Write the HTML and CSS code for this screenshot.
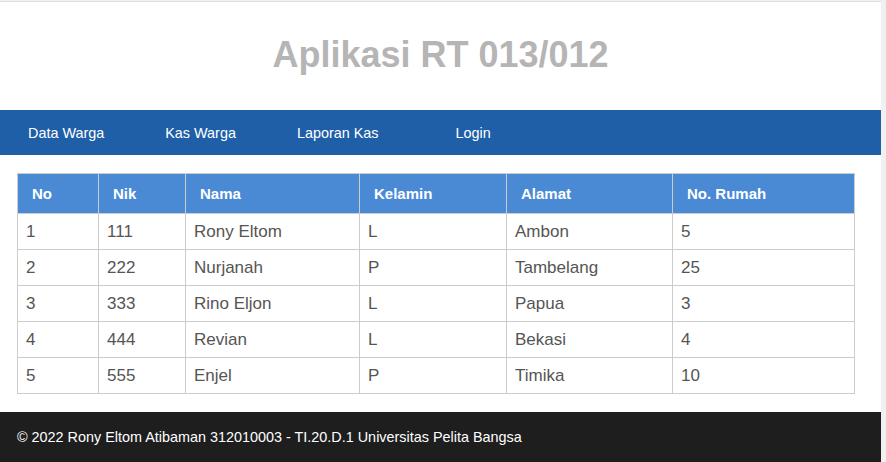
FILE: index.html
```html
<!DOCTYPE html>
<html lang="id">
<head>
<meta charset="utf-8">
<title>Aplikasi RT 013/012</title>
<link rel="stylesheet" href="styles.css">
</head>
<body>
<div class="page">
  <header class="header">
    <h1 class="title">Aplikasi RT 013/012</h1>
  </header>
  <nav class="nav">
    <a class="nav-link" href="#">Data Warga</a>
    <a class="nav-link" href="#">Kas Warga</a>
    <a class="nav-link nav-link-wide" href="#">Laporan Kas</a>
    <a class="nav-link" href="#">Login</a>
  </nav>
  <main class="content">
    <table class="data-table">
      <colgroup>
        <col class="c1"><col class="c2"><col class="c3"><col class="c4"><col class="c5"><col class="c6">
      </colgroup>
      <thead>
        <tr><th>No</th><th>Nik</th><th>Nama</th><th>Kelamin</th><th>Alamat</th><th>No. Rumah</th></tr>
      </thead>
      <tbody>
        <tr><td>1</td><td>111</td><td>Rony Eltom</td><td>L</td><td>Ambon</td><td>5</td></tr>
        <tr><td>2</td><td>222</td><td>Nurjanah</td><td>P</td><td>Tambelang</td><td>25</td></tr>
        <tr><td>3</td><td>333</td><td>Rino Eljon</td><td>L</td><td>Papua</td><td>3</td></tr>
        <tr><td>4</td><td>444</td><td>Revian</td><td>L</td><td>Bekasi</td><td>4</td></tr>
        <tr><td>5</td><td>555</td><td>Enjel</td><td>P</td><td>Timika</td><td>10</td></tr>
      </tbody>
    </table>
  </main>
  <footer class="footer">&copy; 2022 Rony Eltom Atibaman 312010003 - TI.20.D.1 Universitas Pelita Bangsa</footer>
</div>
</body>
</html>
```
FILE: styles.css
```css
html, body {
  margin: 0;
  padding: 0;
}
body {
  background: #f0f0f0;
  font-family: "Liberation Sans", Arial, sans-serif;
  height: 462px;
  overflow: hidden;
}
.page {
  width: 881px;
  background: #ffffff;
  margin-top: 1px;
  border-top: 1px solid #dddddd;
}
.header {
  height: 108px;
  padding-top: 32px;
  box-sizing: border-box;
}
.title {
  margin: 0;
  text-align: center;
  font-size: 36px;
  font-weight: bold;
  line-height: 41px;
  color: #b5b5b5;
}
.nav {
  display: flex;
  align-items: center;
  height: 45px;
  padding-left: 28px;
  background: #1f5fa8;
}
.nav-link {
  color: #ffffff;
  text-decoration: none;
  font-size: 14.4px;
  line-height: 16px;
  margin-right: 61px;
}
.nav-link-wide {
  margin-right: 77px;
}
.content {
  padding: 18px 17px;
}
.data-table {
  border-collapse: collapse;
  table-layout: fixed;
  width: 838px;
}
.c1 { width: 81px; }
.c2 { width: 87px; }
.c3 { width: 174px; }
.c4 { width: 147px; }
.c5 { width: 166px; }
.c6 { width: 182px; }
.data-table th,
.data-table td {
  border: 1px solid #cccccc;
  text-align: left;
  white-space: nowrap;
}
.data-table th {
  background: #4a8ad4;
  color: #ffffff;
  font-size: 15px;
  font-weight: bold;
  height: 40px;
  padding: 0 14px;
  box-sizing: border-box;
}
.data-table td {
  color: #555555;
  font-size: 17px;
  height: 36px;
  padding: 0 8px;
  box-sizing: border-box;
}
.footer {
  background: #1e1e1e;
  color: #ffffff;
  font-size: 14.4px;
  line-height: 16px;
  padding: 17px 17px;
}
```
